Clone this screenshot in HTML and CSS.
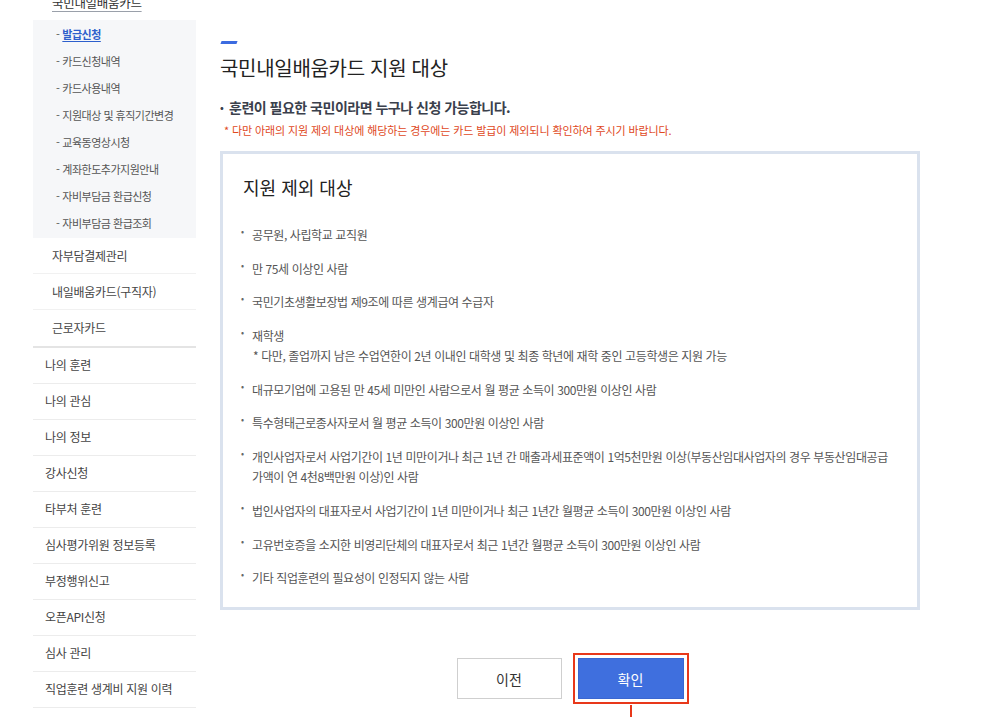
FILE: index.html
```html
<!DOCTYPE html>
<html lang="ko">
<head>
<meta charset="utf-8">
<title>국민내일배움카드 지원 대상</title>
<link rel="stylesheet" href="styles.css">
</head>
<body>
<div class="page">
  <aside class="sidebar">
    <a class="side-top">국민내일배움카드</a>
    <ul class="sub">
      <li class="active"><span class="dash">-</span><a>발급신청</a></li>
      <li><span class="dash">-</span>카드신청내역</li>
      <li><span class="dash">-</span>카드사용내역</li>
      <li><span class="dash">-</span>지원대상 및 휴직기간변경</li>
      <li><span class="dash">-</span>교육동영상시청</li>
      <li><span class="dash">-</span>계좌한도추가지원안내</li>
      <li><span class="dash">-</span>자비부담금 환급신청</li>
      <li><span class="dash">-</span>자비부담금 환급조회</li>
    </ul>
    <ul class="second">
      <li>자부담결제관리</li>
      <li>내일배움카드(구직자)</li>
      <li>근로자카드</li>
    </ul>
    <ul class="first">
      <li>나의 훈련</li>
      <li>나의 관심</li>
      <li>나의 정보</li>
      <li>강사신청</li>
      <li>타부처 훈련</li>
      <li>심사평가위원 정보등록</li>
      <li>부정행위신고</li>
      <li>오픈API신청</li>
      <li>심사 관리</li>
      <li>직업훈련 생계비 지원 이력</li>
    </ul>
  </aside>
  <main class="main">
    <div class="title-bar"></div>
    <h1 class="title">국민내일배움카드 지원 대상</h1>
    <p class="lead"><span class="lead-dot">•</span>훈련이 필요한 국민이라면 누구나 신청 가능합니다.</p>
    <p class="note">* 다만 아래의 지원 제외 대상에 해당하는 경우에는 카드 발급이 제외되니 확인하여 주시기 바랍니다.</p>
    <section class="box">
      <h2 class="box-title">지원 제외 대상</h2>
      <ul class="list">
        <li>공무원, 사립학교 교직원</li>
        <li>만 75세 이상인 사람</li>
        <li>국민기초생활보장법 제9조에 따른 생계급여 수급자</li>
        <li>재학생<br><span class="sub-note">* 다만, 졸업까지 남은 수업연한이 2년 이내인 대학생 및 최종 학년에 재학 중인 고등학생은 지원 가능</span></li>
        <li>대규모기업에 고용된 만 45세 미만인 사람으로서 월 평균 소득이 300만원 이상인 사람</li>
        <li>특수형태근로종사자로서 월 평균 소득이 300만원 이상인 사람</li>
        <li>개인사업자로서 사업기간이 1년 미만이거나 최근 1년 간 매출과세표준액이 1억5천만원 이상(부동산임대사업자의 경우 부동산임대공급가액이 연 4천8백만원 이상)인 사람</li>
        <li>법인사업자의 대표자로서 사업기간이 1년 미만이거나 최근 1년간 월평균 소득이 300만원 이상인 사람</li>
        <li>고유번호증을 소지한 비영리단체의 대표자로서 최근 1년간 월평균 소득이 300만원 이상인 사람</li>
        <li>기타 직업훈련의 필요성이 인정되지 않는 사람</li>
      </ul>
    </section>
    <div class="buttons">
      <button class="btn btn-prev" type="button">이전</button>
      <button class="btn btn-ok" type="button">확인</button>
    </div>
  </main>
</div>
</body>
</html>
```

FILE: styles.css
```css
* { box-sizing: border-box; }
html, body { margin: 0; padding: 0; background: #fff; }
body {
  font-family: "Noto Sans CJK KR", "Noto Sans", sans-serif;
  color: #333;
  overflow: hidden;
  height: 717px;
}
ul { list-style: none; margin: 0; padding: 0; }
p, h1, h2 { margin: 0; }

.page {
  display: flex;
  align-items: flex-start;
  padding-left: 33px;
  gap: 24px;
}

/* sidebar */
.sidebar {
  width: 163px;
  flex: none;
  margin-top: -12px;
}
.side-top {
  display: block;
  height: 32px;
  line-height: 30px;
  padding-left: 19px;
  font-size: 12.5px;
  color: #333;
  letter-spacing: -0.3px;
  text-decoration: underline;
  text-decoration-color: #9aa0aa;
  text-underline-offset: 3px;
}
.sub {
  background: #f6f7f9;
  padding: 1px 0;
}
.sub li {
  height: 27px;
  line-height: 27px;
  padding-left: 23px;
  font-size: 11px;
  color: #555;
  letter-spacing: -0.5px;
}
.sub .dash { margin-right: 3px; }
.sub li.active a {
  color: #2d5fcc;
  font-weight: 700;
  text-decoration: underline;
  text-underline-offset: 2px;
}
.second {
  border-bottom: 2px solid #e4e4e4;
}
.second li {
  height: 36px;
  line-height: 36px;
  padding-left: 19px;
  font-size: 12px;
  color: #444;
  letter-spacing: -0.3px;
  border-bottom: 1px solid #f1f1f1;
}
.second li:last-child { border-bottom: none; }
.first li {
  height: 36px;
  line-height: 33px;
  padding-left: 12px;
  font-size: 12px;
  color: #444;
  letter-spacing: -0.3px;
  border-bottom: 1px solid #ececec;
}

/* main */
.main {
  width: 700px;
  flex: none;
  padding-top: 41px;
}
.title-bar {
  width: 16px;
  height: 3px;
  background: #3b6be0;
  margin-left: 1px;
  transform: skewX(-20deg);
}
.title {
  margin-top: 10px;
  font-size: 20px;
  font-weight: 400;
  line-height: 28px;
  color: #222;
  letter-spacing: -0.3px;
}
.lead {
  margin-top: 15px;
  font-size: 14px;
  font-weight: 700;
  line-height: 20px;
  color: #3a404c;
  letter-spacing: -0.5px;
}
.lead-dot {
  display: inline-block;
  width: 9px;
  font-size: 10px;
  vertical-align: 2px;
}
.note {
  margin-top: 5px;
  padding-left: 4px;
  font-size: 11px;
  line-height: 16px;
  color: #e0481c;
  letter-spacing: -0.1px;
}
.box {
  margin-top: 13px;
  border: 3px solid #dae2ee;
  height: 459px;
  padding: 19px 20px 20px 20px;
}
.box-title {
  font-size: 18px;
  font-weight: 400;
  line-height: 28px;
  color: #222;
}
.list {
  margin-top: 24px;
  display: flex;
  flex-direction: column;
  gap: 13.7px;
}
.list li {
  position: relative;
  padding-left: 9px;
  font-size: 12px;
  line-height: 20px;
  color: #555;
  letter-spacing: -0.4px;
}
.list li::before {
  content: "•";
  position: absolute;
  left: -2px;
  top: -3px;
  font-size: 9px;
  color: #666;
}
.sub-note { padding-left: 1px; }

.buttons {
  margin-top: 48px;
  display: flex;
  justify-content: center;
  gap: 16px;
}
.btn {
  height: 41px;
  font-family: inherit;
  font-size: 14px;
  cursor: pointer;
}
.btn-prev {
  width: 105px;
  background: #fff;
  border: 1px solid #cfcfcf;
  color: #333;
}
.btn-ok {
  position: relative;
  width: 106px;
  background: #3f6fde;
  border: 1px solid #3a66d0;
  color: #fff;
  outline: 2px solid #e8381a;
  outline-offset: 3px;
}
.btn-ok::after {
  content: "";
  position: absolute;
  left: 51px;
  top: 46px;
  width: 2px;
  height: 30px;
  background: #e8381a;
}
```
